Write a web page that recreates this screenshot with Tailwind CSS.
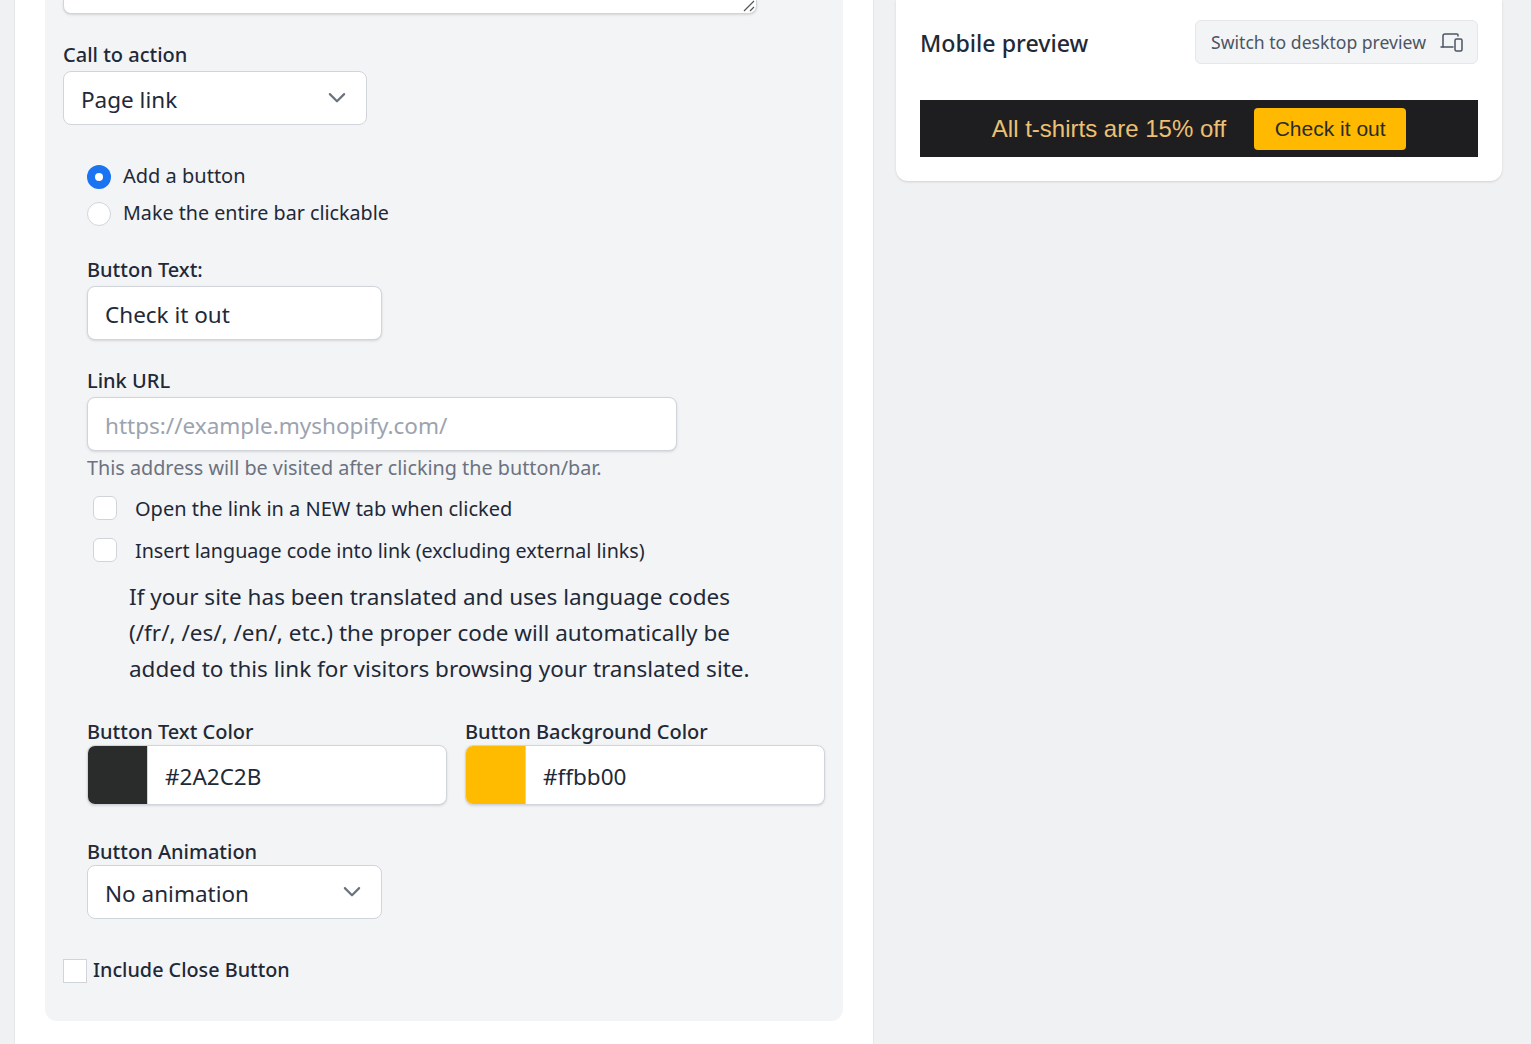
<!DOCTYPE html>
<html><head><meta charset="utf-8">
<script src="https://cdn.jsdelivr.net/npm/@tailwindcss/browser@4"></script>
</head>
<body class="bg-[#f0f1f3] font-['Noto_Sans',sans-serif] text-[#1f2937] overflow-hidden">
<div class="h-[1044px] overflow-hidden flex items-start pl-[14px]">
  <main class="w-[860px] h-[1044px] bg-white border-x border-[#e5e7eb] px-[30px] shrink-0">
    <section class="w-[798px] h-[1021px] bg-[#f3f4f6] rounded-b-xl pl-[18px] pt-0 relative">
      <div class="w-[694px] h-[14px] bg-white border-x border-b border-[#d1d5db] rounded-b-lg shadow-sm relative">
        <svg class="absolute right-0 bottom-0" width="14" height="14" viewBox="0 0 14 14" fill="none" stroke="#555" stroke-width="1.2"><path d="M2 12 12 2M8 12l4-4"/></svg>
      </div>
      <label class="block mt-[27px] text-[20px] leading-[28px] font-medium h-[30px]">Call to action</label>
      <div class="relative w-[304px] h-[54px] bg-white border border-[#d1d5db] rounded-lg pl-[17px] text-[22.5px] leading-[56px]">Page link
        <svg class="absolute right-[18px] top-[15px]" width="22" height="22" viewBox="0 0 20 20" fill="none" stroke="#6b7280" stroke-width="2" stroke-linecap="round" stroke-linejoin="round"><path d="m3.5 6.5 6.5 6.5 6.5-6.5"/></svg>
      </div>
      <div class="pl-[24px]">
        <div class="mt-[32px] flex items-center gap-[12px] h-[37px] text-[20px]"><span class="w-6 h-6 mt-[2px] rounded-full bg-[#1a73f0] flex items-center justify-center"><span class="w-2 h-2 rounded-full bg-white"></span></span>Add a button</div>
        <div class="flex items-center gap-[12px] h-[37px] text-[19.7px]"><span class="w-6 h-6 mt-[2px] rounded-full bg-white border border-[#d1d5db]"></span>Make the entire bar clickable</div>
        <label class="block mt-[25px] h-[30px] text-[20px] leading-[28px] font-medium">Button Text:</label>
        <div class="w-[295px] h-[54px] bg-white border border-[#d1d5db] rounded-lg pl-[17px] text-[22.5px] leading-[56px] shadow-sm">Check it out</div>
        <label class="block mt-[27px] h-[30px] text-[20px] leading-[28px] font-medium">Link URL</label>
        <div class="w-[590px] h-[54px] bg-white border border-[#d1d5db] rounded-lg pl-[17px] text-[22.5px] leading-[56px] text-[#9ca3af] shadow-sm">https://example.myshopify.com/</div>
        <p class="text-[19.8px] leading-[28px] text-[#6b7280] mt-[3px]">This address will be visited after clicking the button/bar.</p>
        <div class="mt-[12px] ml-[6px] flex gap-[18px] h-[28px] text-[20px] leading-[30px]"><span class="w-6 h-6 mt-[2px] rounded-md bg-white border border-[#d1d5db]"></span>Open the link in a NEW tab when clicked</div>
        <div class="mt-[14px] ml-[6px] flex gap-[18px] h-[28px] text-[19.7px] leading-[30px]"><span class="w-6 h-6 mt-[2px] rounded-md bg-white border border-[#d1d5db]"></span>Insert language code into link (excluding external links)</div>
        <p class="ml-[42px] mt-[15px] w-[640px] text-[22.5px] leading-[36px]">If your site has been translated and uses language codes (/fr/, /es/, /en/, etc.) the proper code will automatically be added to this link for visitors browsing your translated site.</p>
        <div class="mt-[31px] grid grid-cols-[360px_360px] gap-x-[18px]">
          <div>
            <label class="block h-[27px] text-[20px] leading-[28px] font-medium">Button Text Color</label>
            <div class="h-[60px] flex bg-white border border-[#d1d5db] rounded-lg overflow-hidden shadow-sm"><span class="w-[60px] bg-[#2a2c2b] border-r border-[#d1d5db]"></span><span class="pl-[17px] text-[22.5px] leading-[62px]">#2A2C2B</span></div>
          </div>
          <div>
            <label class="block h-[27px] text-[20px] leading-[28px] font-medium">Button Background Color</label>
            <div class="h-[60px] flex bg-white border border-[#d1d5db] rounded-lg overflow-hidden shadow-sm"><span class="w-[60px] bg-[#ffbb00] border-r border-[#d1d5db]"></span><span class="pl-[17px] text-[22.5px] leading-[62px]">#ffbb00</span></div>
          </div>
        </div>
        <label class="block mt-[33px] h-[27px] text-[20px] leading-[28px] font-medium">Button Animation</label>
        <div class="relative w-[295px] h-[54px] bg-white border border-[#d1d5db] rounded-lg pl-[17px] text-[22.5px] leading-[56px]">No animation
          <svg class="absolute right-[18px] top-[15px]" width="22" height="22" viewBox="0 0 20 20" fill="none" stroke="#6b7280" stroke-width="2" stroke-linecap="round" stroke-linejoin="round"><path d="m3.5 6.5 6.5 6.5 6.5-6.5"/></svg>
        </div>
      </div>
      <div class="mt-[39px] flex items-center gap-[6px] h-[24px] text-[19.8px] font-medium"><span class="w-6 h-6 mt-[2px] shrink-0 bg-white border border-[#d1d5db]"></span>Include Close Button</div>
    </section>
  </main>
  <aside class="ml-[22px] w-[606px] h-[181px] bg-white rounded-b-xl shadow-sm px-[24px] shrink-0">
    <div class="flex justify-between pt-[20px] h-[100px] items-start">
      <h2 class="text-[23.2px] font-medium mt-[6px]">Mobile preview</h2>
      <button class="h-[44px] w-[283px] bg-[#f3f4f6] border border-[#e5e7eb] rounded-md flex items-center justify-between pl-[15px] pr-[13px] text-[17.6px] text-[#4b5563]"><span class="pt-[1px]">Switch to desktop preview</span>
        <svg width="24" height="24" viewBox="0 0 24 24" fill="none" stroke="#4b5563" stroke-width="1.5" stroke-linecap="round" stroke-linejoin="round"><path d="M3 17V6a2 2 0 0 1 2-2h12a1 1 0 0 1 1 1v1"/><path d="M1 17h12"/><rect x="15" y="9" width="7" height="12" rx="1.5"/></svg>
      </button>
    </div>
    <div class="w-[558px] h-[57px] bg-[#1e1e20] flex items-center justify-center gap-[28px] font-['Liberation_Sans',sans-serif]">
      <span class="text-[24px] text-[#edc073]">All t-shirts are 15% off</span>
      <span class="w-[152px] h-[42px] bg-[#ffb900] rounded-[4px] flex items-center justify-center text-[21px] pt-[1px] text-[#2a2c2b]">Check it out</span>
    </div>
  </aside>
</div>
</body></html>
